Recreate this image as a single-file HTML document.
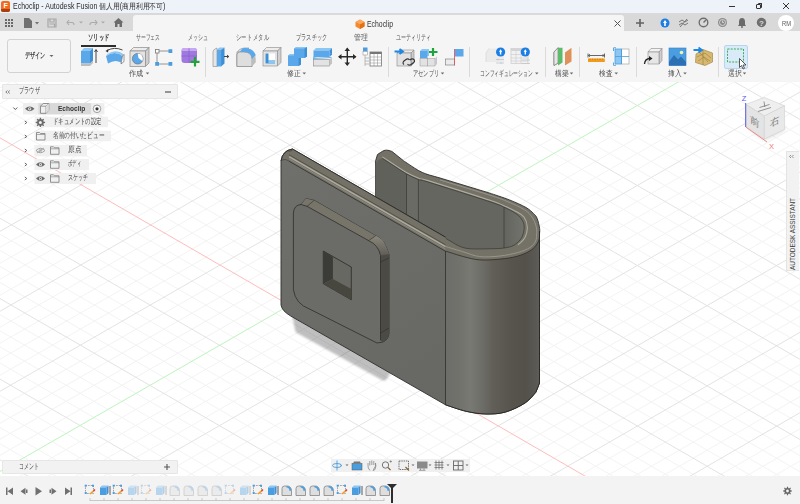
<!DOCTYPE html>
<html><head><meta charset="utf-8">
<style>
*{margin:0;padding:0;box-sizing:border-box}
html,body{width:800px;height:504px;overflow:hidden;background:#fff;font-family:"Liberation Sans",sans-serif;color:#3c3c3c}
.a{position:absolute}
.t{white-space:nowrap;line-height:1}
#title{left:0;top:0;width:800px;height:13px;background:#eef2f9}
#tb{left:0;top:13px;width:800px;height:18px;background:#d9d9d9}
#doctab{left:133px;top:15px;width:491px;height:16px;background:#f5f5f5;border-radius:3px 3px 0 0}
#ribbon{left:0;top:31px;width:800px;height:51px;background:#f5f5f5}
#vp{left:0;top:82px;width:800px;height:394px;overflow:hidden;background:#fff}
#tl{left:0;top:476px;width:800px;height:28px;background:#f3f3f3}
</style></head><body>
<div class="a" id="vp">
<svg width="800" height="394" viewBox="0 82 800 394" style="position:absolute;left:0;top:0">
<path d="M1.7 -482.9L1667.8 475.1M581.7 -481.8L-1093.6 472.8M-12.1 -475.0L1653.9 483.2M595.5 -473.9L-1079.7 480.9M-26.0 -467.1L1640.1 491.2M609.3 -466.0L-1065.9 489.0M-39.9 -459.3L1626.3 499.2M623.1 -458.1L-1052.0 497.0M-67.6 -443.5L1598.6 515.3M650.7 -442.3L-1024.3 513.2M-81.5 -435.6L1584.8 523.3M664.5 -434.3L-1010.5 521.3M-95.4 -427.8L1571.0 531.3M678.3 -426.4L-996.6 529.3M-109.3 -419.9L1557.1 539.4M692.1 -418.5L-982.8 537.4M-137.0 -404.1L1529.5 555.5M719.8 -402.7L-955.0 553.6M-150.9 -396.2L1515.6 563.5M733.6 -394.7L-941.2 561.7M-164.8 -388.3L1501.8 571.6M747.4 -386.8L-927.3 569.8M-178.7 -380.5L1487.9 579.6M761.2 -378.9L-913.4 577.8M-206.5 -364.7L1460.2 595.7M788.9 -363.0L-885.7 594.0M-220.4 -356.8L1446.3 603.7M802.7 -355.1L-871.8 602.1M-234.3 -348.9L1432.5 611.8M816.6 -347.2L-857.9 610.2M-248.3 -341.0L1418.6 619.9M830.4 -339.2L-844.1 618.3M-276.1 -325.2L1390.9 636.0M858.1 -323.4L-816.3 634.5M-290.0 -317.3L1377.0 644.0M871.9 -315.4L-802.4 642.6M-303.9 -309.4L1363.1 652.1M885.7 -307.5L-788.5 650.7M-317.8 -301.5L1349.3 660.1M899.6 -299.6L-774.6 658.8M-345.7 -285.7L1321.5 676.3M927.3 -283.7L-746.9 675.0M-359.6 -277.8L1307.6 684.3M941.1 -275.7L-733.0 683.1M-373.6 -269.9L1293.7 692.4M955.0 -267.8L-719.1 691.2M-387.5 -262.0L1279.8 700.5M968.8 -259.8L-705.2 699.3M-415.4 -246.1L1252.0 716.6M996.6 -244.0L-677.4 715.5M-429.3 -238.2L1238.1 724.7M1010.4 -236.0L-663.5 723.6M-443.3 -230.3L1224.2 732.8M1024.3 -228.1L-649.6 731.7M-457.2 -222.4L1210.3 740.8M1038.1 -220.1L-635.6 739.8M-485.1 -206.6L1182.5 757.0M1065.9 -204.2L-607.8 756.0M-499.1 -198.6L1168.6 765.1M1079.7 -196.3L-593.9 764.1M-513.1 -190.7L1154.7 773.2M1093.6 -188.3L-580.0 772.2M-527.0 -182.8L1140.8 781.3M1107.5 -180.4L-566.1 780.3M-555.0 -166.9L1112.9 797.4M1135.2 -164.4L-538.2 796.6M-568.9 -159.0L1099.0 805.5M1149.1 -156.5L-524.3 804.7M-582.9 -151.1L1085.1 813.6M1163.0 -148.5L-510.4 812.8M-596.9 -143.1L1071.1 821.7M1176.9 -140.6L-496.5 820.9M-624.8 -127.3L1043.3 837.9M1204.6 -124.7L-468.6 837.2M-638.8 -119.3L1029.3 846.0M1218.5 -116.7L-454.7 845.3M-652.8 -111.4L1015.4 854.1M1232.4 -108.7L-440.7 853.4M-666.8 -103.5L1001.4 862.2M1246.3 -100.8L-426.8 861.5M-694.8 -87.6L973.5 878.4M1274.1 -84.8L-398.9 877.8M-708.8 -79.6L959.6 886.5M1288.0 -76.9L-385.0 885.9M-722.8 -71.7L945.6 894.6M1301.9 -68.9L-371.0 894.1M-736.8 -63.7L931.7 902.7M1315.8 -60.9L-357.1 902.2M-764.8 -47.8L903.7 918.9M1343.6 -45.0L-329.2 918.5M-778.8 -39.9L889.8 927.1M1357.5 -37.0L-315.2 926.6M-792.8 -31.9L875.8 935.2M1371.4 -29.0L-301.3 934.7M-806.9 -24.0L861.8 943.3M1385.3 -21.1L-287.3 942.9M-834.9 -8.0L833.9 959.5M1413.2 -5.1L-259.4 959.1M-848.9 -0.1L819.9 967.6M1427.1 2.9L-245.4 967.3M-863.0 7.9L805.9 975.8M1441.0 10.9L-231.5 975.4M-877.0 15.8L791.9 983.9M1454.9 18.8L-217.5 983.6M-905.1 31.8L764.0 1000.2M1482.8 34.8L-189.6 999.9M-919.1 39.7L750.0 1008.3M1496.7 42.8L-175.6 1008.0M-933.1 47.7L736.0 1016.4M1510.6 50.8L-161.6 1016.1M-947.2 55.7L722.0 1024.5M1524.5 58.8L-147.6 1024.3M-975.3 71.6L694.0 1040.8M1552.4 74.7L-119.7 1040.6M-989.3 79.6L679.9 1049.0M1566.3 82.7L-105.7 1048.7M-1003.4 87.6L665.9 1057.1M1580.3 90.7L-91.7 1056.9M-1017.4 95.6L651.9 1065.2M1594.2 98.7L-77.7 1065.0M-1045.6 111.5L623.9 1081.5M1622.1 114.7L-49.7 1081.4M-1059.6 119.5L609.9 1089.7M1636.0 122.7L-35.7 1089.5M-1073.7 127.5L595.8 1097.8M1650.0 130.7L-21.8 1097.7M-1087.8 135.5L581.8 1106.0M1663.9 138.7L-7.8 1105.8" stroke="#f3f3f3" stroke-width="1" fill="none"/>
<path d="M15.6 -490.7L1681.6 467.1M567.9 -489.8L-1107.4 464.7M-53.8 -451.4L1612.5 507.2M636.9 -450.2L-1038.2 505.1M-123.2 -412.0L1543.3 547.4M706.0 -410.6L-968.9 545.5M-192.6 -372.6L1474.1 587.6M775.1 -371.0L-899.6 585.9M-262.2 -333.1L1404.7 627.9M844.2 -331.3L-830.2 626.4M-331.8 -293.6L1335.4 668.2M913.4 -291.6L-760.7 666.9M-401.4 -254.1L1265.9 708.5M982.7 -251.9L-691.3 707.4M-471.2 -214.5L1196.4 748.9M1052.0 -212.2L-621.7 747.9M-610.9 -135.2L1057.2 829.8M1190.8 -132.6L-482.5 829.1M-680.8 -95.5L987.5 870.3M1260.2 -92.8L-412.8 869.7M-750.8 -55.8L917.7 910.8M1329.7 -52.9L-343.1 910.3M-820.9 -16.0L847.9 951.4M1399.2 -13.1L-273.3 951.0M-891.0 23.8L777.9 992.0M1468.8 26.8L-203.5 991.7M-961.2 63.7L708.0 1032.7M1538.5 66.8L-133.6 1032.4M-1031.5 103.5L637.9 1073.4M1608.2 106.7L-63.7 1073.2M-1101.9 143.5L567.8 1114.1M1677.9 146.7L6.2 1114.0" stroke="#e3e3e3" stroke-width="1" fill="none"/>

<path d="M1121.4 -172.4L-552.2 788.5" stroke="#bdf4bd" stroke-width="1" fill="none"/>
<path d="M-541.0 -174.9L1126.8 789.3" stroke="#ffbcbc" stroke-width="1" fill="none"/>

<defs>
<linearGradient id="cyl" x1="445" x2="540" y1="0" y2="0" gradientUnits="userSpaceOnUse">
<stop offset="0" stop-color="#6c6d68"/>
<stop offset="0.15" stop-color="#71726c"/>
<stop offset="0.27" stop-color="#787973"/>
<stop offset="0.38" stop-color="#6f6f69"/>
<stop offset="0.5" stop-color="#615f58"/>
<stop offset="0.7" stop-color="#57544d"/>
<stop offset="0.85" stop-color="#54514b"/>
<stop offset="0.95" stop-color="#5a5852"/>
<stop offset="1" stop-color="#605e58"/>
</linearGradient>
<linearGradient id="inr" x1="504" x2="526" y1="0" y2="0" gradientUnits="userSpaceOnUse">
<stop offset="0" stop-color="#63645e"/>
<stop offset="1" stop-color="#75756f"/>
</linearGradient>
<linearGradient id="pl" x1="281" y1="160" x2="445" y2="400" gradientUnits="userSpaceOnUse">
<stop offset="0" stop-color="#6f706b"/>
<stop offset="1" stop-color="#676863"/>
</linearGradient>
<filter id="bl" x="-20%" y="-50%" width="140%" height="200%"><feGaussianBlur stdDeviation="0.9"/></filter>
</defs>
<path d="M292 314 L392 370 L386 380 Q384 381 381 379.5 L297 333 Q294.5 331 294.5 327 Z" fill="#000" fill-opacity="0.25" filter="url(#bl)"/>
<path d="M375.6 197.0L375.6 160.9L377.5 154.5C378.6 153.8 382.2 151.3 384.0 150.6C385.8 149.9 386.7 150.2 388.0 150.3C389.3 150.5 391.3 151.3 392.0 151.5L403.7 160.9C405.7 162.2 412.8 167.0 415.7 168.8C418.6 170.6 418.9 170.8 421.0 171.8C423.1 172.8 424.8 173.6 428.0 174.6C431.2 175.6 438.0 177.4 440.0 178.0L490.0 193.2C493.2 194.3 503.4 197.5 509.4 199.9C515.4 202.3 522.0 205.2 526.0 207.5C530.0 209.8 531.6 211.7 533.5 213.5C535.4 215.3 536.2 216.1 537.2 218.6C538.2 221.1 539.2 225.7 539.6 228.3C540.0 230.9 539.5 233.1 539.5 234.0L539.5 383L535.8 392.3C534.0 394.1 530.3 399.5 525.3 402.8C520.3 406.1 512.2 410.1 505.6 412.0C499.0 413.9 492.5 414.1 485.9 414.0C479.3 413.9 472.9 412.8 466.2 411.3C459.5 409.8 448.9 405.9 445.5 404.8Z" fill="#747167" stroke="#2e2d2a" stroke-width="0.9"/>
<path d="M382.3 158.3C384.4 159.7 390.9 163.8 395.0 166.5C399.1 169.2 402.9 172.0 406.9 174.2C410.9 176.4 415.3 178.4 418.8 179.7C422.3 181.0 416.1 178.3 428.0 182.0C439.9 185.7 477.2 197.5 490.0 201.8C502.8 206.1 500.8 205.8 505.0 207.7C509.2 209.6 512.2 211.1 515.0 213.0C517.8 214.9 520.0 216.7 521.5 219.0C523.0 221.3 524.2 223.9 524.2 227.0C524.2 230.1 523.4 234.5 521.7 237.5C520.0 240.5 517.0 243.4 514.0 245.2C511.1 246.9 508.0 247.4 504.0 248.0C500.0 248.6 495.6 248.7 490.0 248.8C484.4 248.9 475.2 249.2 470.2 248.8C465.2 248.4 462.8 247.5 459.8 246.4C456.8 245.3 454.3 243.3 452.0 242.0C449.7 240.7 447.0 239.1 446.0 238.5L375.6 197L375.6 165Q377 159.5 382.3 158.3Z" fill="#60615b"/>
<path d="M418.4 179.7L428 182L490 201.8L504 207.5L504 248L490 248.8L470.2 248.8L459.8 246.4L446 238.5L418.4 222Z" fill="#656660"/>
<path d="M504 207.5L515.0 213.0C516.1 214.0 520.0 216.7 521.5 219.0C523.0 221.3 524.2 223.9 524.2 227.0C524.2 230.1 523.4 234.5 521.7 237.5C520.0 240.5 517.0 243.5 514.0 245.2C511.1 246.9 505.7 247.2 504.0 247.6Z" fill="url(#inr)"/>
<path d="M406.5 174.2 L418.4 179.7 L418.4 222 L406.5 215 Z" fill="#6a6b65"/>
<path d="M382.3 156.9C384.4 158.3 390.9 162.5 395.0 165.2C399.1 167.8 402.9 170.6 406.9 172.8C410.9 175.0 415.3 177.0 418.8 178.3C422.3 179.6 416.1 176.9 428.0 180.6C439.9 184.3 477.2 196.0 490.0 200.3C502.8 204.6 500.7 204.4 505.0 206.3C509.3 208.2 512.8 209.7 516.0 211.5C519.2 213.3 522.1 214.4 524.0 217.0C525.9 219.6 527.1 223.6 527.3 227.0C527.5 230.4 526.5 234.5 525.0 237.5C523.5 240.5 519.2 243.6 518.0 244.8" fill="none" stroke="#aeab9f" stroke-width="1.1"/>
<path d="M382.3 158.3C384.4 159.7 390.9 163.8 395.0 166.5C399.1 169.2 402.9 172.0 406.9 174.2C410.9 176.4 415.3 178.4 418.8 179.7C422.3 181.0 416.1 178.3 428.0 182.0C439.9 185.7 477.2 197.5 490.0 201.8C502.8 206.1 500.8 205.8 505.0 207.7C509.2 209.6 512.2 211.1 515.0 213.0C517.8 214.9 520.0 216.7 521.5 219.0C523.0 221.3 524.2 223.9 524.2 227.0C524.2 230.1 523.4 234.5 521.7 237.5C520.0 240.5 517.0 243.4 514.0 245.2C511.1 246.9 508.0 247.4 504.0 248.0C500.0 248.6 495.6 248.7 490.0 248.8C484.4 248.9 475.2 249.2 470.2 248.8C465.2 248.4 462.8 247.5 459.8 246.4C456.8 245.3 454.3 243.3 452.0 242.0C449.7 240.7 447.0 239.1 446.0 238.5" fill="none" stroke="#3a3935" stroke-width="0.7"/>
<path d="M440.0 180.0C448.3 182.5 478.7 191.6 490.0 195.2C501.3 198.8 502.4 199.5 508.0 201.8C513.6 204.1 519.8 207.0 523.5 209.2C527.2 211.4 528.7 212.9 530.5 215.0C532.3 217.1 533.5 219.2 534.5 221.5C535.5 223.8 536.4 226.8 536.7 229.0C537.1 231.2 536.8 233.0 536.6 235.0C536.4 237.0 536.7 238.9 535.6 241.0C534.5 243.1 533.0 245.6 530.0 247.5C527.0 249.4 522.8 251.1 517.8 252.5C512.8 253.9 506.4 255.3 500.0 256.0C493.6 256.7 485.7 257.3 479.7 256.6C473.7 255.9 469.5 253.7 463.8 252.0C458.1 250.3 448.6 247.4 445.5 246.5" fill="none" stroke="#9c998d" stroke-width="0.9"/>
<path d="M406.5 174 L406.5 215 M418.4 179.5 L418.4 222 M504 207 L504 248" stroke="#3a3935" stroke-width="0.7" fill="none"/>
<path d="M539.5 234.0C539.4 235.2 539.9 238.4 538.6 241.0C537.4 243.6 535.4 247.0 532.0 249.5C528.6 252.0 523.3 254.4 518.0 256.0C512.7 257.6 506.3 258.5 500.0 259.1C493.7 259.8 486.0 260.3 480.0 259.9C474.0 259.5 469.6 258.2 463.8 256.7C458.1 255.2 448.6 252.0 445.5 251.1L445.5 404.8L466.2 411.3C469.5 411.8 479.3 413.9 485.9 414.0C492.5 414.1 499.0 413.9 505.6 412.0C512.2 410.1 520.3 406.1 525.3 402.8C530.3 399.5 533.4 395.6 535.8 392.3C538.2 389.0 538.9 384.6 539.5 383.0L539.5 234Z" fill="url(#cyl)"/>
<path d="M539.5 234.0C539.4 235.2 539.9 238.4 538.6 241.0C537.4 243.6 535.4 247.0 532.0 249.5C528.6 252.0 523.3 254.4 518.0 256.0C512.7 257.6 506.3 258.5 500.0 259.1C493.7 259.8 486.0 260.3 480.0 259.9C474.0 259.5 469.6 258.2 463.8 256.7C458.1 255.2 448.6 252.0 445.5 251.1" fill="none" stroke="#2e2d2a" stroke-width="0.8"/>
<path d="M539.5 231L539.5 383L535.8 392.3C534.0 394.1 530.3 399.5 525.3 402.8C520.3 406.1 512.2 410.1 505.6 412.0C499.0 413.9 492.5 414.1 485.9 414.0C479.3 413.9 472.9 412.8 466.2 411.3C459.5 409.8 448.9 405.9 445.5 404.8" fill="none" stroke="#2b2a27" stroke-width="1"/>
<path d="M281 305 L281 161 Q282.5 150.5 292.5 149 L445.5 237.2 L445.5 404.8 L290.7 316 Q282 311 281 305 Z" fill="url(#pl)"/>
<path d="M445.5 404.8 L290.7 316 Q282 311 281 305 L281 161 Q282.5 150.5 292.5 149 L445.5 237.2" fill="none" stroke="#2e2d2a" stroke-width="0.9"/>
<path d="M282.3 158.5 Q284 151 292.5 149 L445.5 237.2 L445.5 251.5 L289 161 Z" fill="#747167"/>
<path d="M289 154.7 L445.5 244.8" stroke="#45443f" stroke-width="0.7" fill="none"/><path d="M289 156.6 L445.5 246.6" stroke="#aeab9f" stroke-width="1.3" fill="none"/><path d="M289 158.9 L445.5 249" stroke="#93918a" stroke-width="0.8" fill="none"/>
<path d="M289 161.2 L445.5 251.3" stroke="#35342f" stroke-width="0.9" fill="none"/>
<path d="M281 161 Q282.5 150.5 292.5 149 L445.5 237.2" stroke="#2e2d2a" stroke-width="0.9" fill="none"/>
<path d="M282 160 Q285.5 158.5 289 161 M288.5 151.5 L292.5 150.3" stroke="#3a3935" stroke-width="0.6" fill="none"/>
<path d="M445.5 251 L445.5 405" stroke="#2e2d2a" stroke-width="0.8" fill="none"/>
<path d="M293.4 213 Q294 205 301 204.5 L305.9 198.6 L314.2 200.4 L375.7 235.8 Q383 239 385.2 244.8 L389 254.3 L389 333 Q389 339 383 342 L377 343 L309.7 309.1 Q295.5 304 293.4 289.7 Z" fill="#6b6c67" stroke="#2e2d2a" stroke-width="0.8"/>
<path d="M301 204.5 L305.9 198.6 L314.2 200.4 L375.7 235.8 Q383 239 385.2 244.8 L389 254.3 L380.5 255.5 Q378.5 245 368.6 240.6 L307 206.3 Z" fill="#77746a"/>
<linearGradient id="bc" x1="0" y1="236" x2="0" y2="262" gradientUnits="userSpaceOnUse"><stop offset="0" stop-color="#8a877b"/><stop offset="0.5" stop-color="#6d6b62"/><stop offset="1" stop-color="#4d4c47"/></linearGradient>
<path d="M368.6 240.6 L375.7 235.8 Q383 239 385.2 244.8 L389 254.3 L389 258 L380.5 262 L380.5 255.5 Q378.5 245 368.6 240.6 Z" fill="url(#bc)"/>
<path d="M380.5 255.5 L389 254.3 L389 333 Q389 339 383 342 L380.5 341 Z" fill="#4b4a45"/>
<path d="M301 204.5 L307 206.3 L368.6 240.6 Q378.5 245 380.5 255.5 L380.5 340" fill="none" stroke="#2e2d2a" stroke-width="0.8"/>
<path d="M307 206.3 L314.2 200.4 M368.6 240.6 L375.7 235.8 M380.5 262 L389 258 M380.5 333 L389 328" fill="none" stroke="#2e2d2a" stroke-width="0.6"/>
<path d="M323.3 251 L351.3 267 L351.3 299.8 L323.3 283.7 Z" fill="#676862" stroke="#2a2a27" stroke-width="0.8"/>
<path d="M323.3 251 L332.9 256.9 L332.9 278.9 L323.3 283.7 Z" fill="#3b3b38"/>
<path d="M332.9 278.9 L351.3 289 L351.3 299.8 L323.3 283.7 Z" fill="#48473f"/>
</svg>
</div>
<div class="a" id="title"></div>
<div class="a" id="tb"></div>
<div class="a" id="doctab"></div>
<div class="a" id="ribbon"></div>
<!-- title bar -->
<div class="a" style="left:1px;top:1px;width:9px;height:11px;background:#f36b1c;border-radius:2px;overflow:hidden"><div class="a" style="left:0;top:8px;width:9px;height:3px;background:#a83f10"></div><div class="a t" style="left:2.5px;top:1px;font-size:7px;font-weight:bold;color:#fff">F</div></div>
<div class="a" style="left:729px;top:6px;width:6px;height:1px;background:#333"></div>
<div class="a" style="left:756px;top:4px;width:5px;height:5px;border:1px solid #333;border-radius:1px"></div>
<div class="a" style="left:757.5px;top:3px;width:4.5px;height:4.5px;border-top:1px solid #333;border-right:1px solid #333;border-radius:1px"></div>
<svg class="a" style="left:782px;top:2px" width="8" height="8"><path d="M1 1L7 7M7 1L1 7" stroke="#333" stroke-width="1"/></svg>
<!-- toolbar icons -->
<svg class="a" style="left:4px;top:18px" width="10" height="10"><g fill="#6a6a6a"><rect x="1" y="1" width="2" height="2"/><rect x="4" y="1" width="2" height="2"/><rect x="7" y="1" width="2" height="2"/><rect x="1" y="4" width="2" height="2"/><rect x="4" y="4" width="2" height="2"/><rect x="7" y="4" width="2" height="2"/><rect x="1" y="7" width="2" height="2"/><rect x="4" y="7" width="2" height="2"/><rect x="7" y="7" width="2" height="2"/></g></svg>
<svg class="a" style="left:23px;top:17px" width="18" height="12"><path d="M1 1H6L9 4V11H1Z" fill="#707070"/><path d="M12 5H16L14 7.5Z" fill="#707070"/></svg>
<svg class="a" style="left:47px;top:18px" width="10" height="10"><path d="M1 1H9V9H1Z M3 1V4H7V1 M2.5 6H7.5V9" fill="none" stroke="#a8a8a8" stroke-width="1.2"/></svg>
<svg class="a" style="left:66px;top:18px" width="40" height="10"><path d="M3 2L1 4.5L3 7M1 4.5H6Q8 4.5 8 7" fill="none" stroke="#ababab" stroke-width="1.1"/><path d="M13 3.5H17L15 5.5Z" fill="#ababab"/><path d="M29 2L31 4.5L29 7M31 4.5H26Q24 4.5 24 7" fill="none" stroke="#ababab" stroke-width="1.1"/><path d="M35 3.5H39L37 5.5Z" fill="#ababab"/></svg>
<svg class="a" style="left:113px;top:17px" width="11" height="11"><path d="M5.5 1L10.5 5.5H9V10H2V5.5H0.5Z" fill="#6c6c6c"/><rect x="4.5" y="7" width="2" height="3" fill="#d9d9d9"/></svg>
<!-- doc tab content -->
<svg class="a" style="left:354.5px;top:19px" width="10" height="10"><path d="M5 0.5L9.5 3V7.5L5 10L0.5 7.5V3Z" fill="#f28a2e"/><path d="M5 5.3L9.5 3V7.5L5 10Z" fill="#e56f12"/><path d="M5 0.5L9.5 3L5 5.3L0.5 3Z" fill="#f9a860"/></svg>
<svg class="a" style="left:614px;top:20px" width="7" height="7"><path d="M0.5 0.5L6.5 6.5M6.5 0.5L0.5 6.5" stroke="#555" stroke-width="1"/></svg>
<svg class="a" style="left:635px;top:18px" width="10" height="10"><path d="M5 1V9M1 5H9" stroke="#616161" stroke-width="1.6"/></svg>
<svg class="a" style="left:660px;top:18px" width="10" height="10"><circle cx="5" cy="5" r="4.5" fill="#1a7ee6"/><path d="M5 2L7 5H5.8V8H4.2V5H3Z" fill="#fff"/></svg>
<svg class="a" style="left:678px;top:18px" width="11" height="10"><path d="M1 4L4 2L7 4L10 2M1 7L4 5L7 7L10 5M2 9L9 1" stroke="#777" stroke-width="1" fill="none"/></svg>
<svg class="a" style="left:698px;top:17px" width="11" height="11"><circle cx="5.5" cy="5.5" r="4.3" fill="none" stroke="#6f6f6f" stroke-width="1.4"/><path d="M5.5 5.5L8 3" stroke="#6f6f6f" stroke-width="1.4"/></svg>
<svg class="a" style="left:717px;top:17px" width="11" height="11"><circle cx="5.5" cy="5.5" r="4.5" fill="#8a8a8a"/><circle cx="5.5" cy="5.5" r="3" fill="none" stroke="#d9d9d9" stroke-width="0.9"/><path d="M5.5 3.5V5.5H7" stroke="#d9d9d9" stroke-width="0.9" fill="none"/></svg>
<svg class="a" style="left:737px;top:17px" width="10" height="11"><path d="M5 1Q8 1 8 5V7.5L9 9H1L2 7.5V5Q2 1 5 1Z" fill="#6a6a6a"/><circle cx="5" cy="10" r="1" fill="#6a6a6a"/></svg>
<svg class="a" style="left:756px;top:17px" width="11" height="11"><circle cx="5.5" cy="5.5" r="4.7" fill="#6e6e6e"/><text x="5.5" y="8.5" font-size="8" font-weight="bold" fill="#d9d9d9" text-anchor="middle" font-family="Liberation Sans">?</text></svg>
<div class="a" style="left:778px;top:15px;width:16px;height:16px;border-radius:50%;background:#fff"></div>

<!-- design button -->
<div class="a" style="left:7px;top:38.5px;width:63.5px;height:34.5px;border:1px solid #d2d2d2;border-radius:3px;background:#f5f5f5"></div>
<svg class="a" style="left:49px;top:54px" width="5" height="4"><path d="M0.5 1H4.5L2.5 3Z" fill="#666"/></svg>
<!-- tab underline -->
<div class="a" style="left:81px;top:45px;width:34.5px;height:1.7px;background:#2d2d2d"></div>
<!-- separators -->
<div class="a" style="left:205px;top:47px;width:1px;height:30px;background:#dadada"></div>
<div class="a" style="left:387.5px;top:47px;width:1px;height:30px;background:#dadada"></div>
<div class="a" style="left:469px;top:47px;width:1px;height:30px;background:#dadada"></div>
<div class="a" style="left:545px;top:47px;width:1px;height:30px;background:#dadada"></div>
<div class="a" style="left:579px;top:47px;width:1px;height:30px;background:#dadada"></div>
<div class="a" style="left:636px;top:47px;width:1px;height:30px;background:#dadada"></div>
<div class="a" style="left:718px;top:47px;width:1px;height:30px;background:#dadada"></div>
<!-- dropdown arrows next to group labels -->
<svg class="a" style="left:0;top:0" width="800" height="82">
<g fill="#6a6a6a"><path d="M145.75 72.5H149.25L147.50 74.5Z"/><path d="M302.50 72.5H306.00L304.25 74.5Z"/><path d="M440.75 72.5H444.25L442.50 74.5Z"/><path d="M535.00 72.5H538.50L536.75 74.5Z"/><path d="M569.75 72.5H573.25L571.50 74.5Z"/><path d="M614.50 72.5H618.00L616.25 74.5Z"/><path d="M683.25 72.5H686.75L685.00 74.5Z"/><path d="M742.75 72.5H746.25L744.50 74.5Z"/></g>
<!-- extrude -->
<path d="M81 51L84 48H93L90 51Z" fill="#8cc6f2"/>
<path d="M90 51L93 48V60.5L90 63.5Z" fill="#3f8fd6"/>
<rect x="81" y="51" width="9" height="12.5" fill="#5aa8ea"/>
<path d="M81 63.5H90L93 60.5V63L90 66H81Z" fill="#bdbdbd"/>
<path d="M96 63V50M94.5 52L96 49.5L97.5 52" stroke="#333" stroke-width="0.9" fill="none"/>
<!-- revolve -->
<path d="M106 56Q115 50 122.5 56L121 62.5Q115 59 108 63.5Z" fill="#5aa8ea"/>
<path d="M106 56Q115 50 122.5 56L124 54.5Q116 48.5 107.5 54Z" fill="#8cc6f2"/>
<path d="M122.5 56L124 54.5V61.5L121 64Z" fill="#fff" stroke="#555" stroke-width="0.6"/>
<path d="M107 50.5Q114.5 46.5 122.5 50" stroke="#333" stroke-width="0.9" fill="none"/><path d="M105.5 51L108.5 49L108 52.5Z" fill="#333"/>
<!-- hole box -->
<path d="M130 51L133.5 47.5H149L145.5 51Z" fill="#ececec" stroke="#8a8a8a" stroke-width="0.7"/>
<path d="M145.5 51L149 47.5V63L145.5 66.5Z" fill="#cfcfcf" stroke="#8a8a8a" stroke-width="0.7"/>
<rect x="130" y="51" width="15.5" height="15.5" fill="#e3e3e3" stroke="#8a8a8a" stroke-width="0.7"/>
<circle cx="137.7" cy="58.7" r="5.3" fill="#5aa8ea" stroke="#777" stroke-width="0.8"/>
<path d="M137.7 53.4A5.3 5.3 0 0 1 142.3 61L138.5 58Z" fill="#fff"/>
<!-- sketch rect -->
<path d="M158 51H169M157 53V62.5M159 64H169" stroke="#8a8a8a" stroke-width="0.9"/>
<rect x="155.5" y="49.5" width="3.5" height="3.5" fill="#fff" stroke="#777" stroke-width="0.8"/>
<rect x="168.5" y="49.2" width="3.8" height="3.8" fill="#4a9ee0"/>
<rect x="155.2" y="62" width="3.8" height="3.8" fill="#4a9ee0"/>
<rect x="168.5" y="62" width="3.8" height="3.8" fill="#4a9ee0"/>
<!-- purple form -->
<path d="M181.5 51Q181.5 48 184.5 48H194Q197 48 197 51V60Q197 63 194 63H184.5Q181.5 63 181.5 60Z" fill="#a078e0"/>
<path d="M184.5 48H194Q197 48 197 51H184Q181.5 51 181.5 51Q181.5 48 184.5 48Z" fill="#c5a9f3"/>
<path d="M189 48.5V63M181.5 56H197" stroke="#8a62cc" stroke-width="0.8"/>
<path d="M195 57V66.5M190.5 61.8H199.5" stroke="#1fa33a" stroke-width="2.2"/>
<!-- press pull -->
<path d="M215 49Q213 50 213 52V66.5H217V48Z" fill="#e6e6e6" stroke="#888" stroke-width="0.6"/>
<path d="M217 50L220 47.5V64L217 66.5Z" fill="#3f8fd6"/>
<rect x="217" y="50" width="0" height="0"/>
<path d="M217 50H221.5L224.5 47.5H220Z" fill="#8cc6f2"/>
<path d="M221 50L224.5 47.5V63.5L221 66.5Z" fill="#3f8fd6"/>
<rect x="217" y="50" width="4.2" height="16.5" fill="#5aa8ea"/>
<path d="M224 56.5H228.5M227 55L228.8 56.5L227 58" stroke="#333" stroke-width="0.9" fill="none"/>
<!-- fillet -->
<path d="M237 55Q237 49 244 48H249L245.5 51.5V63.5L242 66.5H237Z" fill="#dedede" stroke="#888" stroke-width="0.6"/>
<path d="M244 48Q253 48 255.5 55L252 61Q250 53 245.5 51.5Z" fill="#5aa8ea"/>
<path d="M242 66.5L245.5 63.5H252L255.5 58V62L249 66.5Z" fill="#bdbdbd"/>
<rect x="237" y="52" width="15" height="14.5" fill="#dedede" stroke="#888" stroke-width="0.6" rx="0"/>
<path d="M237 55Q237 52 240 52H244Q251.5 52 252 59V66.5H237Z" fill="#dedede" stroke="#888" stroke-width="0.6"/>
<path d="M244 48Q253 48 255.5 55L252 59Q251.5 52 244 52L240 52Q242 48 244 48Z" fill="#5aa8ea"/>
<path d="M252 59L255.5 55V62.5L252 66.5Z" fill="#bdbdbd"/>
<!-- shell -->
<path d="M263 51L266.5 47.5H281L277.5 51Z" fill="#ededed" stroke="#888" stroke-width="0.6"/>
<path d="M277.5 51L281 47.5V62.5L277.5 66Z" fill="#cfcfcf" stroke="#888" stroke-width="0.6"/>
<rect x="263" y="51" width="14.5" height="15" fill="#e3e3e3" stroke="#888" stroke-width="0.6"/>
<rect x="265.5" y="53.5" width="9.5" height="10" fill="#fff"/>
<path d="M265.5 53.5H268.5V60.5H275V63.5H265.5Z" fill="#3f8fd6"/>
<path d="M268.5 60.5H275V63.5H268.5Z" fill="#8cc6f2"/>
<!-- combine -->
<path d="M294 48.5L296.5 47H307V56.5L304.5 58H294Z" fill="#5aa8ea"/>
<path d="M294 48.5L296.5 47H307L304.5 48.5Z" fill="#8cc6f2"/>
<path d="M288 55.5L290.5 54H301V64.5L298.5 66H288Z" fill="#5aa8ea"/>
<path d="M288 55.5L290.5 54H294V55.5Z" fill="#8cc6f2"/>
<path d="M304.5 58L307 56.5V47.5L304.5 48.5Z" fill="#3f8fd6"/>
<path d="M298.5 66L301 64.5V58H298.5Z" fill="#3f8fd6"/>
<!-- split -->
<path d="M313.5 50.5L316 48H332L329.5 50.5Z" fill="#8cc6f2"/>
<path d="M329.5 50.5L332 48V54.5L329.5 57Z" fill="#3f8fd6"/>
<rect x="313.5" y="50.5" width="16" height="6.5" fill="#5aa8ea"/>
<path d="M313 58.5L331.5 57.5M313 57.5L331.5 53.5" stroke="#5aa8ea" stroke-width="0.9"/>
<rect x="313.5" y="59.5" width="16" height="6.5" fill="#e3e3e3" stroke="#888" stroke-width="0.6"/>
<path d="M329.5 59.5L332 57.5V63.5L329.5 66Z" fill="#c4c4c4"/>
<!-- move -->
<path d="M347.3 48.5V65M339 56.7H355.5" stroke="#2a2a2a" stroke-width="1.4"/>
<path d="M344.5 51L347.3 47.5L350 51ZM344.5 62.5L347.3 66L350 62.5ZM341.5 54L338 56.7L341.5 59.5ZM353 54L356.5 56.7L353 59.5Z" fill="#2a2a2a"/>
<!-- table -->
<rect x="363" y="47.5" width="4.5" height="4" fill="#4a9ee0"/>
<rect x="363" y="51.5" width="4.5" height="3.5" fill="#fff" stroke="#888" stroke-width="0.5"/>
<path d="M365 55V66M365 58H369M365 61H369M365 64H369" stroke="#999" stroke-width="0.6"/>
<rect x="370" y="52" width="11.5" height="14" fill="#fff" stroke="#777" stroke-width="0.8"/>
<rect x="370" y="52" width="11.5" height="2" fill="#777"/>
<path d="M370 57H381.5M370 60H381.5M370 63H381.5M374 54V66M377.5 54V66" stroke="#888" stroke-width="0.5"/>
<!-- assembly link -->
<path d="M397 53L400 50H414L411 53Z" fill="#eeeeee" stroke="#888" stroke-width="0.6"/>
<path d="M411 53L414 50V63L411 66Z" fill="#cdcdcd" stroke="#888" stroke-width="0.6"/>
<rect x="397" y="53" width="14" height="13" fill="#e2e2e2" stroke="#888" stroke-width="0.6"/>
<path d="M394.5 51.5H402M399.5 49L403 51.5L399.5 54" stroke="#1e88e5" stroke-width="1.8" fill="none"/>
<path d="M404 64.5Q402 63 404 61L406 59.5Q408 58 409.5 60M410 60Q412 58 414 59.5Q415.5 61.5 413 63L411 64.5Q409 66 407.5 64" stroke="#333" stroke-width="1.1" fill="none"/>
<!-- new component -->
<path d="M420 51L422 49H429V56H420Z" fill="#8cc6f2"/>
<rect x="420" y="51" width="7.5" height="7.5" fill="#5aa8ea"/>
<rect x="420" y="58.5" width="7.5" height="7.5" fill="#e2e2e2" stroke="#999" stroke-width="0.5"/>
<rect x="427.5" y="58.5" width="7.5" height="7.5" fill="#e2e2e2" stroke="#999" stroke-width="0.5"/>
<path d="M435 58.5L437 56.5V64L435 66Z" fill="#c8c8c8"/>
<path d="M433 48V56M429 52H437.5" stroke="#1fa33a" stroke-width="2.2"/>
<!-- joint origin -->
<rect x="445.5" y="59" width="9" height="6" fill="#ececec" stroke="#888" stroke-width="0.7"/>
<path d="M454.5 49V65.5" stroke="#e0535b" stroke-width="0.9"/>
<rect x="455" y="49" width="8.5" height="7.5" fill="#5aa8ea"/>
<!-- config 1 -->
<path d="M486 53L489 48.5H504V62L486 62Z" fill="#ebebeb"/>
<path d="M486 62V53L489 48.5" fill="none" stroke="#d0d0d0" stroke-width="0.6"/>
<circle cx="500.6" cy="52" r="4.6" fill="#1a7ee6"/><path d="M500.6 49.2L502.3 51.7H501.3V54.5H499.9V51.7H498.9Z" fill="#fff"/>
<path d="M496 59.5H504M496 63H504" stroke="#c5c5c5" stroke-width="0.8"/><path d="M498 58.5V60.5M501 62V64" stroke="#aac8e6" stroke-width="0.8"/>
<!-- config 2 -->
<rect x="511" y="48.5" width="17" height="15" fill="#f2f2f2" stroke="#c9c9c9" stroke-width="0.7"/>
<rect x="511" y="48.5" width="17" height="2.5" fill="#d4d4d4"/>
<path d="M511 54.5H528M511 58H528M511 61H528M516 51V63.5M521 51V63.5" stroke="#cacaca" stroke-width="0.6"/>
<circle cx="525.3" cy="52" r="4.6" fill="#1a7ee6"/><path d="M525.3 49.2L527 51.7H526V54.5H524.6V51.7H523.6Z" fill="#fff"/>
<path d="M522 60H530M522 63.5H530" stroke="#c5c5c5" stroke-width="0.8"/>
<!-- plane -->
<path d="M554 52L558 47.8V63L554 65.5Z" fill="#d9d9d9" stroke="#666" stroke-width="0.7"/>
<path d="M558 47.8L562.5 47.8V62.5L558 65.5Z" fill="#5dbb6a"/>
<path d="M554 65.5L558 63V47.8L554 52Z" fill="#e6e6e6" stroke="#777" stroke-width="0.6"/>
<path d="M558 63V48L561.5 48.5V62Z" fill="#5dbb6a"/>
<path d="M565 52.5L571.5 47.8V61.5L565 65.5Z" fill="#e0915a"/>
<!-- measure -->
<path d="M588 53.5V57.5M604.5 53.5V57.5M588.5 55.5H604" stroke="#444" stroke-width="0.8"/>
<path d="M590 54L588.5 55.5L590 57M602.5 54L604 55.5L602.5 57" stroke="#444" stroke-width="0.7" fill="none"/>
<rect x="588" y="58.5" width="16.8" height="3.5" fill="#f29a1a"/>
<path d="M590 58.5V60M592.5 58.5V59.5M595 58.5V60M597.5 58.5V59.5M600 58.5V60M602.5 58.5V59.5" stroke="#a85e00" stroke-width="0.5"/>
<!-- section -->
<rect x="615" y="49" width="6.5" height="15" fill="#8cc6f2"/>
<rect x="621.5" y="49" width="7.5" height="15" fill="#fff" stroke="#999" stroke-width="0.6"/>
<path d="M615 56.5H629M621.5 49V64" stroke="#4a9ee0" stroke-width="0.8"/>
<path d="M613.5 51V47.8H616M613.5 62.5V65.3H616" stroke="#4a9ee0" stroke-width="0.9" fill="none"/>
<path d="M615 49H621.5V64H615Z" fill="none" stroke="#4a9ee0" stroke-width="0.8"/>
<!-- insert derive -->
<path d="M648 52L651 48.5H662L659 52Z" fill="#f2f2f2" stroke="#8a8a8a" stroke-width="0.6"/>
<path d="M659 52L662 48.5V60.5L659 64Z" fill="#cfcfcf" stroke="#8a8a8a" stroke-width="0.6"/>
<rect x="648" y="52" width="11" height="12" fill="#e6e6e6" stroke="#8a8a8a" stroke-width="0.6"/>
<path d="M644.5 64Q645 58.5 650 58.5" stroke="#222" stroke-width="1.3" fill="none"/><path d="M649 56L652.5 58.5L649 61Z" fill="#222"/>
<!-- canvas -->
<rect x="669" y="48" width="17" height="17.4" fill="#4a9ee0" stroke="#2f7fc4" stroke-width="0.6"/>
<path d="M669 62L674 55L678 59.5L681 56.5L686 62V65.4H669Z" fill="#2c6fb3"/>
<circle cx="681.5" cy="52.5" r="1.8" fill="#f6efb0"/>
<!-- mesh insert -->
<path d="M696 54L703 49.5L712.5 53V62L705 65.5L695.5 62.5Z" fill="#d6b870" stroke="#9a7d3d" stroke-width="0.6"/>
<path d="M697 57L705 53L711 58M698 61L704 57L710 61M703 50V65M700 53L708 62" stroke="#8f7336" stroke-width="0.5" fill="none"/>
<path d="M693.5 50H701M698.5 47.5L702 50L698.5 52.5" stroke="#1e88e5" stroke-width="1.8" fill="none"/>
</svg>
<!-- select -->
<div class="a" style="left:724px;top:45px;width:23.8px;height:23.8px;background:#d9ebf9;border:1px solid #b5d6f1;border-radius:2px"></div>
<svg class="a" style="left:724px;top:45px" width="26" height="26"><rect x="3.5" y="4" width="16" height="13" fill="none" stroke="#3dae54" stroke-width="1" stroke-dasharray="2,1.2"/><path d="M15.5 13.5V22.5L17.5 20.5L19 24L20.5 23.3L19 20H22Z" fill="#fff" stroke="#333" stroke-width="0.8"/></svg>

<!-- browser header -->
<div class="a" style="left:2px;top:84px;width:175.5px;height:14.5px;background:#f2f2f2;border:1px solid #e6e6e6;border-radius:1px"></div>
<svg class="a" style="left:0;top:82.8px" width="800" height="110">
<path d="M7.5 7.5L5.8 9L7.5 10.5M9.8 7.5L8.1 9L9.8 10.5" stroke="#666" stroke-width="0.8" fill="none"/>
<path d="M165 9H171" stroke="#555" stroke-width="1.2"/>
<!-- row backgrounds -->
<rect x="22.9" y="20.1" width="81.5" height="11.3" fill="#eeeeee" />
<rect x="38.3" y="20.1" width="52.6" height="11.3" fill="#d9d9d9"/>
<rect x="34.6" y="33.7" width="73.5" height="10.5" fill="#f0f0f0"/>
<rect x="34.6" y="47.7" width="76.5" height="10.5" fill="#f0f0f0"/>
<rect x="34.4" y="62" width="52.6" height="11.4" fill="#f0f0f0" />
<rect x="34.4" y="76" width="54.6" height="11" fill="#f0f0f0" />
<rect x="34.4" y="90" width="61.6" height="11" fill="#f0f0f0" />
<!-- chevrons -->
<path d="M13.3 24.5L15.3 26.5L17.3 24.5" stroke="#444" stroke-width="0.9" fill="none"/>
<path d="M24.8 38L26.8 39.5L24.8 41M24.8 52L26.8 53.5L24.8 55M24.8 66L26.8 67.5L24.8 69M24.8 80L26.8 81.5L24.8 83M24.8 94L26.8 95.5L24.8 97" stroke="#555" stroke-width="0.9" fill="none"/>
<!-- eye row1 -->
<path d="M25 25.8Q29.7 21 34.5 25.8Q29.7 30.6 25 25.8Z" fill="#6b6b6b"/><circle cx="29.7" cy="25.8" r="1.6" fill="#eee"/><circle cx="29.7" cy="25.8" r="0.8" fill="#6b6b6b"/>
<!-- component icon -->
<path d="M40.5 23.2L43.2 20.5H48.8V27.3L46 30.3H40.5Z" fill="#f0f0f0" stroke="#7a7a7a" stroke-width="0.8" stroke-linejoin="round"/><path d="M40.5 23.2H46V30.3M46 23.2L48.8 20.5" stroke="#7a7a7a" stroke-width="0.7" fill="none"/><path d="M46 23.2L48.8 20.5V27.3L46 30.3Z" fill="#dcdcdc"/>
<!-- radio -->
<circle cx="97" cy="25.8" r="3.8" fill="#fafafa" stroke="#8a8a8a" stroke-width="0.8"/><circle cx="97" cy="25.8" r="1.6" fill="#333"/>
<!-- gear -->
<path d="M43.72 38.67L45.06 38.79L45.06 40.01L43.72 40.13L43.26 41.23L44.13 42.27L43.27 43.13L42.23 42.26L41.13 42.72L41.01 44.06L39.79 44.06L39.67 42.72L38.57 42.26L37.53 43.13L36.67 42.27L37.54 41.23L37.08 40.13L35.74 40.01L35.74 38.79L37.08 38.67L37.54 37.57L36.67 36.53L37.53 35.67L38.57 36.54L39.67 36.08L39.79 34.74L41.01 34.74L41.13 36.08L42.23 36.54L43.27 35.67L44.13 36.53L43.26 37.57Z" fill="#6a6a6a"/><circle cx="40.4" cy="39.4" r="1.5" fill="#f0f0f0"/>
<!-- folders -->
<path d="M36.5 49.5H39.5L40.5 50.5H45V57H36.5Z" fill="none" stroke="#7a7a7a" stroke-width="0.8"/><path d="M36.5 51.5H45" stroke="#7a7a7a" stroke-width="0.6"/>
<path d="M50.5 63.8H53.5L54.5 64.8H59V71.3H50.5Z" fill="none" stroke="#7a7a7a" stroke-width="0.8"/><path d="M50.5 65.8H59" stroke="#7a7a7a" stroke-width="0.6"/>
<path d="M50.5 77.8H53.5L54.5 78.8H59V85.3H50.5Z" fill="none" stroke="#7a7a7a" stroke-width="0.8"/><path d="M50.5 79.8H59" stroke="#7a7a7a" stroke-width="0.6"/>
<path d="M50.5 91.8H53.5L54.5 92.8H59V99.3H50.5Z" fill="none" stroke="#7a7a7a" stroke-width="0.8"/><path d="M50.5 93.8H59" stroke="#7a7a7a" stroke-width="0.6"/>
<!-- eyes rows 4-6 -->
<path d="M36 67.5Q40.5 63 45 67.5Q40.5 72 36 67.5Z" fill="none" stroke="#9a9a9a" stroke-width="0.9"/><circle cx="40.5" cy="67.5" r="1.2" fill="none" stroke="#9a9a9a" stroke-width="0.7"/><path d="M37 70L44 65" stroke="#9a9a9a" stroke-width="0.8"/>
<path d="M36 81.5Q40.5 77 45 81.5Q40.5 86 36 81.5Z" fill="#6b6b6b"/><circle cx="40.5" cy="81.5" r="1.5" fill="#eee"/><circle cx="40.5" cy="81.5" r="0.7" fill="#6b6b6b"/>
<path d="M36 95.5Q40.5 91 45 95.5Q40.5 100 36 95.5Z" fill="#6b6b6b"/><circle cx="40.5" cy="95.5" r="1.5" fill="#eee"/><circle cx="40.5" cy="95.5" r="0.7" fill="#6b6b6b"/>
</svg>
<!-- view cube -->
<svg class="a" style="left:735px;top:90px" width="60" height="62">
<defs><filter id="cs" x="-50%" y="-50%" width="200%" height="200%"><feGaussianBlur stdDeviation="2"/></filter></defs>
<path d="M11 37L29.4 49.5L49.6 39.4L48 36L29.4 46Z" fill="#000" fill-opacity="0.2" filter="url(#cs)"/>
<path d="M29.4 7.5L49.6 15.8L29.4 26L10.7 14.4Z" fill="#efefef" stroke="#cfcfcf" stroke-width="0.6" stroke-linejoin="round"/>
<path d="M10.7 14.4L29.4 26V49L10.7 36.7Z" fill="#e4e4e4" stroke="#cfcfcf" stroke-width="0.6" stroke-linejoin="round"/>
<path d="M29.4 26L49.6 15.8V39.4L29.4 49Z" fill="#e9e9e9" stroke="#cfcfcf" stroke-width="0.6" stroke-linejoin="round"/>

<path d="M24.5 17.5L34.5 14.5M29 11.5L29.8 17M23 21.5L36 17.5" stroke="#7a7a7a" stroke-width="0.8" fill="none"/>
<g transform="translate(20 31) matrix(1 0.62 0 1 0 0)"><text x="0" y="3.5" font-size="9.5" fill="#7a7a7a" text-anchor="middle">前</text></g>
<g transform="translate(39.5 31) matrix(1 -0.5 0 1 0 0)"><text x="0" y="3.5" font-size="9.5" fill="#7a7a7a" text-anchor="middle">右</text></g>
<path d="M10.7 13V37" stroke="#5a5ae8" stroke-width="1"/>
<path d="M10.7 37L32 52" stroke="#ee8888" stroke-width="1"/>
<text x="9" y="10.5" font-size="7.5" fill="#5a5ae8" text-anchor="middle" font-family="Liberation Sans">Z</text>
<text x="36.5" y="58.5" font-size="7.5" fill="#ee7777" text-anchor="middle" font-family="Liberation Sans">X</text>
</svg>
<!-- assistant panel -->
<div class="a" style="left:785.5px;top:151px;width:13px;height:120px;background:#f2f2f2;border:1px solid #e4e4e4;border-right:none"></div>
<svg class="a" style="left:788px;top:154px" width="8" height="6"><path d="M3 1L1.5 2.5L3 4M5.5 1L4 2.5L5.5 4" stroke="#777" stroke-width="0.8" fill="none"/></svg>
<div class="a t" style="left:788.7px;top:269.5px;font-size:7px;color:#3a3a3a;transform:rotate(-90deg) scaleX(0.92);transform-origin:0 0">AUTODESK ASSISTANT</div>
<!-- comment bar -->
<div class="a" style="left:2px;top:460px;width:176px;height:14px;background:#f2f2f2;border:1px solid #e6e6e6;border-radius:1px"></div>
<svg class="a" style="left:163px;top:463px" width="8" height="8"><path d="M4 1V7M1 4H7" stroke="#555" stroke-width="1.1"/></svg>

<div class="a" id="tl"></div>
<svg class="a" style="left:0;top:476px" width="800" height="28">
<!-- player controls -->
<g fill="#707070">
<path d="M6 11.5H7.5V19H6ZM7.5 15.25L13 11.5V19Z"/>
<path d="M20.5 15.25L25.5 11.8V18.7ZM26 13.5H27.5V17H26Z"/>
<path d="M35.5 11L42 15.25L35.5 19.5Z"/>
<path d="M49.5 13.5H51V17H49.5ZM51.5 11.8L56.5 15.25L51.5 18.7Z"/>
<path d="M65 11.5L70.5 15.25L65 19ZM70.5 11.5H72V19H70.5Z"/>
</g>
<!-- timeline ticks -->
<path d="M90 24.5H384" stroke="#bdbdbd" stroke-width="0.8"/>
<g stroke="#bdbdbd" stroke-width="0.8">
<path d="M90 22V25"/><path d="M104 22V25"/><path d="M118 22V25"/><path d="M132 22V25"/><path d="M146 22V25"/><path d="M160 22V25"/><path d="M174 22V25"/><path d="M188 22V25"/><path d="M202 22V25"/><path d="M216 22V25"/><path d="M230 22V25"/><path d="M244 22V25"/><path d="M258 22V25"/><path d="M272 22V25"/><path d="M286 22V25"/><path d="M300 22V25"/><path d="M314 22V25"/><path d="M328 22V25"/><path d="M342 22V25"/><path d="M356 22V25"/><path d="M370 22V25"/><path d="M384 22V25"/>
</g>
<g transform="translate(85 9)" opacity="1"><rect x="0.5" y="0.5" width="8" height="8" fill="none" stroke="#8a8a8a" stroke-width="0.8" stroke-dasharray="1.6,1"/><rect x="-0.3" y="-0.3" width="2" height="2" fill="#4a9ee0"/><rect x="7" y="-0.3" width="2" height="2" fill="#4a9ee0"/><rect x="-0.3" y="7" width="2" height="2" fill="#4a9ee0"/><path d="M5 9L9.5 5" stroke="#f0a020" stroke-width="1.6"/><path d="M8.5 6L10 4.5" stroke="#e04040" stroke-width="1.6"/></g><g transform="translate(99 9)" opacity="1"><path d="M1 2.5L3 0.5H9.5L7.5 2.5Z" fill="#8cc6f2"/><path d="M7.5 2.5L9.5 0.5V8L7.5 10Z" fill="#3f8fd6"/><rect x="1" y="2.5" width="6.5" height="7.5" fill="#4a9ee0"/><path d="M11 10V1" stroke="#333" stroke-width="0.8"/></g><g transform="translate(113 9)" opacity="1"><rect x="0.5" y="0.5" width="8" height="8" fill="none" stroke="#8a8a8a" stroke-width="0.8" stroke-dasharray="1.6,1"/><rect x="-0.3" y="-0.3" width="2" height="2" fill="#4a9ee0"/><rect x="7" y="-0.3" width="2" height="2" fill="#4a9ee0"/><rect x="-0.3" y="7" width="2" height="2" fill="#4a9ee0"/><path d="M5 9L9.5 5" stroke="#f0a020" stroke-width="1.6"/><path d="M8.5 6L10 4.5" stroke="#e04040" stroke-width="1.6"/></g><g transform="translate(127 9)" opacity="0.35"><path d="M1 2.5L3 0.5H9.5L7.5 2.5Z" fill="#8cc6f2"/><path d="M7.5 2.5L9.5 0.5V8L7.5 10Z" fill="#3f8fd6"/><rect x="1" y="2.5" width="6.5" height="7.5" fill="#4a9ee0"/><path d="M11 10V1" stroke="#333" stroke-width="0.8"/></g><g transform="translate(141 9)" opacity="0.35"><rect x="0.5" y="0.5" width="8" height="8" fill="none" stroke="#8a8a8a" stroke-width="0.8" stroke-dasharray="1.6,1"/><rect x="-0.3" y="-0.3" width="2" height="2" fill="#4a9ee0"/><rect x="7" y="-0.3" width="2" height="2" fill="#4a9ee0"/><rect x="-0.3" y="7" width="2" height="2" fill="#4a9ee0"/><path d="M5 9L9.5 5" stroke="#f0a020" stroke-width="1.6"/><path d="M8.5 6L10 4.5" stroke="#e04040" stroke-width="1.6"/></g><g transform="translate(155 9)" opacity="0.35"><path d="M1 2.5L3 0.5H9.5L7.5 2.5Z" fill="#8cc6f2"/><path d="M7.5 2.5L9.5 0.5V8L7.5 10Z" fill="#3f8fd6"/><rect x="1" y="2.5" width="6.5" height="7.5" fill="#4a9ee0"/><path d="M11 10V1" stroke="#333" stroke-width="0.8"/></g><g transform="translate(169 9)" opacity="0.35"><path d="M1 3.5Q1 1 3.5 1H6Q10 1 10.5 5.5V10.5H1Z" fill="#dedede" stroke="#777" stroke-width="0.7"/><path d="M5.5 1Q10 1 10.5 5.5L8.5 6Q8.5 2.5 5.5 2.5Z" fill="#4a9ee0"/></g><g transform="translate(183 9)" opacity="0.35"><path d="M1 3.5Q1 1 3.5 1H6Q10 1 10.5 5.5V10.5H1Z" fill="#dedede" stroke="#777" stroke-width="0.7"/><path d="M5.5 1Q10 1 10.5 5.5L8.5 6Q8.5 2.5 5.5 2.5Z" fill="#4a9ee0"/></g><g transform="translate(197 9)" opacity="0.35"><path d="M1 3.5Q1 1 3.5 1H6Q10 1 10.5 5.5V10.5H1Z" fill="#dedede" stroke="#777" stroke-width="0.7"/><path d="M5.5 1Q10 1 10.5 5.5L8.5 6Q8.5 2.5 5.5 2.5Z" fill="#4a9ee0"/></g><g transform="translate(211 9)" opacity="0.35"><path d="M1 3.5Q1 1 3.5 1H6Q10 1 10.5 5.5V10.5H1Z" fill="#dedede" stroke="#777" stroke-width="0.7"/><path d="M5.5 1Q10 1 10.5 5.5L8.5 6Q8.5 2.5 5.5 2.5Z" fill="#4a9ee0"/></g><g transform="translate(225 9)" opacity="0.35"><rect x="0.5" y="0.5" width="8" height="8" fill="none" stroke="#8a8a8a" stroke-width="0.8" stroke-dasharray="1.6,1"/><rect x="-0.3" y="-0.3" width="2" height="2" fill="#4a9ee0"/><rect x="7" y="-0.3" width="2" height="2" fill="#4a9ee0"/><rect x="-0.3" y="7" width="2" height="2" fill="#4a9ee0"/><path d="M5 9L9.5 5" stroke="#f0a020" stroke-width="1.6"/><path d="M8.5 6L10 4.5" stroke="#e04040" stroke-width="1.6"/></g><g transform="translate(239 9)" opacity="0.35"><path d="M1 2.5L3 0.5H9.5L7.5 2.5Z" fill="#8cc6f2"/><path d="M7.5 2.5L9.5 0.5V8L7.5 10Z" fill="#3f8fd6"/><rect x="1" y="2.5" width="6.5" height="7.5" fill="#4a9ee0"/><path d="M11 10V1" stroke="#333" stroke-width="0.8"/></g><g transform="translate(253 9)" opacity="1"><rect x="0.5" y="0.5" width="8" height="8" fill="none" stroke="#8a8a8a" stroke-width="0.8" stroke-dasharray="1.6,1"/><rect x="-0.3" y="-0.3" width="2" height="2" fill="#4a9ee0"/><rect x="7" y="-0.3" width="2" height="2" fill="#4a9ee0"/><rect x="-0.3" y="7" width="2" height="2" fill="#4a9ee0"/><path d="M5 9L9.5 5" stroke="#f0a020" stroke-width="1.6"/><path d="M8.5 6L10 4.5" stroke="#e04040" stroke-width="1.6"/></g><g transform="translate(267 9)" opacity="1"><path d="M1 2.5L3 0.5H9.5L7.5 2.5Z" fill="#8cc6f2"/><path d="M7.5 2.5L9.5 0.5V8L7.5 10Z" fill="#3f8fd6"/><rect x="1" y="2.5" width="6.5" height="7.5" fill="#4a9ee0"/><path d="M11 10V1" stroke="#333" stroke-width="0.8"/></g><g transform="translate(281 9)" opacity="1"><path d="M1 3.5Q1 1 3.5 1H6Q10 1 10.5 5.5V10.5H1Z" fill="#dedede" stroke="#777" stroke-width="0.7"/><path d="M5.5 1Q10 1 10.5 5.5L8.5 6Q8.5 2.5 5.5 2.5Z" fill="#4a9ee0"/></g><g transform="translate(295 9)" opacity="1"><path d="M1 3.5Q1 1 3.5 1H6Q10 1 10.5 5.5V10.5H1Z" fill="#dedede" stroke="#777" stroke-width="0.7"/><path d="M5.5 1Q10 1 10.5 5.5L8.5 6Q8.5 2.5 5.5 2.5Z" fill="#4a9ee0"/></g><g transform="translate(309 9)" opacity="1"><path d="M1 3.5Q1 1 3.5 1H6Q10 1 10.5 5.5V10.5H1Z" fill="#dedede" stroke="#777" stroke-width="0.7"/><path d="M5.5 1Q10 1 10.5 5.5L8.5 6Q8.5 2.5 5.5 2.5Z" fill="#4a9ee0"/></g><g transform="translate(323 9)" opacity="1"><path d="M1 3.5Q1 1 3.5 1H6Q10 1 10.5 5.5V10.5H1Z" fill="#dedede" stroke="#777" stroke-width="0.7"/><path d="M5.5 1Q10 1 10.5 5.5L8.5 6Q8.5 2.5 5.5 2.5Z" fill="#4a9ee0"/></g><g transform="translate(337 9)" opacity="1"><rect x="0.5" y="0.5" width="8" height="8" fill="none" stroke="#8a8a8a" stroke-width="0.8" stroke-dasharray="1.6,1"/><rect x="-0.3" y="-0.3" width="2" height="2" fill="#4a9ee0"/><rect x="7" y="-0.3" width="2" height="2" fill="#4a9ee0"/><rect x="-0.3" y="7" width="2" height="2" fill="#4a9ee0"/><path d="M5 9L9.5 5" stroke="#f0a020" stroke-width="1.6"/><path d="M8.5 6L10 4.5" stroke="#e04040" stroke-width="1.6"/></g><g transform="translate(351 9)" opacity="1"><path d="M1 2.5L3 0.5H9.5L7.5 2.5Z" fill="#8cc6f2"/><path d="M7.5 2.5L9.5 0.5V8L7.5 10Z" fill="#3f8fd6"/><rect x="1" y="2.5" width="6.5" height="7.5" fill="#4a9ee0"/><path d="M11 10V1" stroke="#333" stroke-width="0.8"/></g><g transform="translate(365 9)" opacity="1"><path d="M1 3.5Q1 1 3.5 1H6Q10 1 10.5 5.5V10.5H1Z" fill="#dedede" stroke="#777" stroke-width="0.7"/><path d="M5.5 1Q10 1 10.5 5.5L8.5 6Q8.5 2.5 5.5 2.5Z" fill="#4a9ee0"/></g><g transform="translate(379 9)" opacity="1"><path d="M1 3.5Q1 1 3.5 1H6Q10 1 10.5 5.5V10.5H1Z" fill="#dedede" stroke="#777" stroke-width="0.7"/><path d="M5.5 1Q10 1 10.5 5.5L8.5 6Q8.5 2.5 5.5 2.5Z" fill="#4a9ee0"/></g>
<!-- marker -->
<path d="M387 8H397L393 12V27H391V12Z" fill="#2e2e2e"/>
<!-- gear -->
<path d="M790.53 14.34L791.86 14.43L791.86 15.57L790.53 15.66L790.11 16.67L790.99 17.68L790.18 18.49L789.17 17.61L788.16 18.03L788.07 19.36L786.93 19.36L786.84 18.03L785.83 17.61L784.82 18.49L784.01 17.68L784.89 16.67L784.47 15.66L783.14 15.57L783.14 14.43L784.47 14.34L784.89 13.33L784.01 12.32L784.82 11.51L785.83 12.39L786.84 11.97L786.93 10.64L788.07 10.64L788.16 11.97L789.17 12.39L790.18 11.51L790.99 12.32L790.11 13.33Z" fill="#666"/><circle cx="787.5" cy="15" r="1.4" fill="#f3f3f3"/>
</svg>
<!-- nav bar -->
<div class="a" style="left:331px;top:459px;width:139px;height:12.5px;background:#efefef;opacity:0.95"></div>
<svg class="a" style="left:331px;top:459px" width="140" height="13">
<ellipse cx="6" cy="6.5" rx="4.5" ry="2" fill="none" stroke="#4a9ee0" stroke-width="0.9"/><path d="M6 1.5V11.5" stroke="#4a9ee0" stroke-width="0.9"/><path d="M9 5.5L10.5 6.5L9 7.5" stroke="#4a9ee0" stroke-width="0.7" fill="none"/>
<path d="M14.5 5.5H17.5L16 7Z" fill="#666"/>
<rect x="21" y="4.5" width="10" height="6.5" fill="#4a9ee0" stroke="#555" stroke-width="0.5"/><path d="M22 4.5L23 2.5H29L30 4.5Z" fill="#777"/>
<path d="M39 11.5Q36.5 9 37 6V4M38.8 6.5V2M40.8 6V1.5M42.8 6V2M44.5 7V4Q45.5 7 44 10.5L42 11.5Z" fill="none" stroke="#888" stroke-width="0.8"/>
<circle cx="54.5" cy="6" r="3.2" fill="none" stroke="#666" stroke-width="0.9"/><path d="M56.8 8.3L59.5 11" stroke="#8a5a2a" stroke-width="1.2"/><path d="M58.5 2.5H61M59.7 1.3V3.7" stroke="#666" stroke-width="0.6"/>
<rect x="68" y="2" width="9.5" height="8.5" fill="none" stroke="#666" stroke-width="0.9" stroke-dasharray="1.5,0.8"/><path d="M74.5 8L78 11.5" stroke="#8a5a2a" stroke-width="1.1"/>
<path d="M80.5 5.5H83.5L82 7Z" fill="#666"/>
<rect x="86" y="2.5" width="10.5" height="7" fill="#8a8a8a"/><path d="M89.5 9.5V11M93 9.5V11M88 11.3H94.5" stroke="#777" stroke-width="0.7"/>
<path d="M97.5 5.5H100.5L99 7Z" fill="#666"/>
<path d="M105 1.5V10.5M108 1.5V10.5M111 1.5V10.5M103.5 3.5H112.5M103.5 6H112.5M103.5 8.5H112.5" stroke="#666" stroke-width="0.7"/>
<path d="M115.5 5.5H118.5L117 7Z" fill="#666"/>
<rect x="122.5" y="2" width="9.5" height="9" fill="none" stroke="#666" stroke-width="0.9"/><path d="M127.25 2V11M122.5 6.5H132" stroke="#666" stroke-width="0.9"/>
<path d="M134.5 5.5H137.5L136 7Z" fill="#666"/>
</svg>

<div class="a t" style="left:12.6px;top:3.3px;font-size:8.2px;font-weight:normal;color:#2b2b2b;transform:scaleX(0.854);transform-origin:0 0">Echoclip - Autodesk Fusion 個人用(商用利用不可)</div>
<div class="a t" style="left:367px;top:20.6px;font-size:8.2px;font-weight:normal;color:#333;transform:scaleX(0.840);transform-origin:0 0">Echoclip</div>
<div class="a t" style="left:781.5px;top:19.9px;font-size:7px;font-weight:normal;color:#555;transform:scaleX(0.826);transform-origin:0 0">RM</div>
<div class="a t" style="left:87.5px;top:34.3px;font-size:7.9px;font-weight:bold;color:#2e2e2e;transform:scaleX(0.666);transform-origin:0 0">ソリッド</div>
<div class="a t" style="left:136px;top:34.3px;font-size:7.9px;font-weight:normal;color:#555;transform:scaleX(0.600);transform-origin:0 0">サーフェス</div>
<div class="a t" style="left:187.5px;top:34.3px;font-size:7.9px;font-weight:normal;color:#555;transform:scaleX(0.625);transform-origin:0 0">メッシュ</div>
<div class="a t" style="left:236px;top:34.3px;font-size:7.9px;font-weight:normal;color:#555;transform:scaleX(0.657);transform-origin:0 0">シート メタル</div>
<div class="a t" style="left:296px;top:34.3px;font-size:7.9px;font-weight:normal;color:#555;transform:scaleX(0.656);transform-origin:0 0">プラスチック</div>
<div class="a t" style="left:353.8px;top:34.3px;font-size:7.9px;font-weight:normal;color:#555;transform:scaleX(0.856);transform-origin:0 0">管理</div>
<div class="a t" style="left:396px;top:34.3px;font-size:7.9px;font-weight:normal;color:#555;transform:scaleX(0.625);transform-origin:0 0">ユーティリティ</div>
<div class="a t" style="left:25.4px;top:51.5px;font-size:7.9px;font-weight:bold;color:#3a3a3a;transform:scaleX(0.644);transform-origin:0 0">デザイン</div>
<div class="a t" style="left:129px;top:69.8px;font-size:7.9px;font-weight:normal;color:#4a4a4a;transform:scaleX(0.887);transform-origin:0 0">作成</div>
<div class="a t" style="left:286.5px;top:69.8px;font-size:7.9px;font-weight:normal;color:#4a4a4a;transform:scaleX(0.844);transform-origin:0 0">修正</div>
<div class="a t" style="left:412.8px;top:69.8px;font-size:7.9px;font-weight:normal;color:#4a4a4a;transform:scaleX(0.650);transform-origin:0 0">アセンブリ</div>
<div class="a t" style="left:479.7px;top:69.8px;font-size:7.9px;font-weight:normal;color:#4a4a4a;transform:scaleX(0.597);transform-origin:0 0">コンフィギュレーション</div>
<div class="a t" style="left:554.5px;top:69.8px;font-size:7.9px;font-weight:normal;color:#4a4a4a;transform:scaleX(0.844);transform-origin:0 0">構築</div>
<div class="a t" style="left:599px;top:69.8px;font-size:7.9px;font-weight:normal;color:#4a4a4a;transform:scaleX(0.844);transform-origin:0 0">検査</div>
<div class="a t" style="left:668px;top:69.8px;font-size:7.9px;font-weight:normal;color:#4a4a4a;transform:scaleX(0.831);transform-origin:0 0">挿入</div>
<div class="a t" style="left:727.5px;top:69.8px;font-size:7.9px;font-weight:normal;color:#4a4a4a;transform:scaleX(0.862);transform-origin:0 0">選択</div>
<div class="a t" style="left:19px;top:86.8px;font-size:7.9px;font-weight:normal;color:#3a3a3a;transform:scaleX(0.647);transform-origin:0 0">ブラウザ</div>
<div class="a t" style="left:57.7px;top:105.0px;font-size:7.5px;font-weight:bold;color:#333;transform:scaleX(0.873);transform-origin:0 0">Echoclip</div>
<div class="a t" style="left:53.2px;top:118.0px;font-size:7.9px;font-weight:normal;color:#3a3a3a;transform:scaleX(0.672);transform-origin:0 0">ドキュメントの設定</div>
<div class="a t" style="left:53.2px;top:131.9px;font-size:7.9px;font-weight:normal;color:#3a3a3a;transform:scaleX(0.711);transform-origin:0 0">名前の付いたビュー</div>
<div class="a t" style="left:67.7px;top:146.0px;font-size:7.9px;font-weight:normal;color:#3a3a3a;transform:scaleX(0.831);transform-origin:0 0">原点</div>
<div class="a t" style="left:67.7px;top:160.0px;font-size:7.9px;font-weight:normal;color:#3a3a3a;transform:scaleX(0.533);transform-origin:0 0">ボディ</div>
<div class="a t" style="left:67.7px;top:174.0px;font-size:7.9px;font-weight:normal;color:#3a3a3a;transform:scaleX(0.634);transform-origin:0 0">スケッチ</div>
<div class="a t" style="left:19px;top:462.8px;font-size:7.9px;font-weight:normal;color:#3a3a3a;transform:scaleX(0.609);transform-origin:0 0">コメント</div>
</body></html>
